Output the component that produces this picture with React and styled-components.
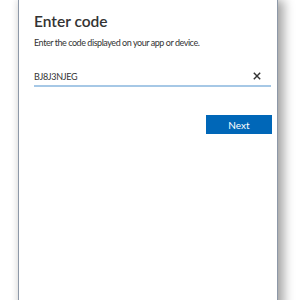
import React from "react";
import styled, { createGlobalStyle } from "styled-components";

const Global = createGlobalStyle`
  html, body { margin: 0; padding: 0; background: #ffffff; }
  body { width: 300px; height: 300px; overflow: hidden; font-family: "Lato", "Noto Sans", sans-serif; }
`;

const Stage = styled.div`
  width: 300px;
  height: 300px;
  display: flex;
  background: #ffffff;
`;

const Window = styled.div`
  margin-left: 18px;
  width: 260px;
  height: 310px;
  background: #ffffff;
  border-left: 1px solid #8d98a8;
  border-right: 1px solid #8d98a8;
  box-shadow: 6px 0 10px rgba(0, 0, 0, 0.35), -2px 0 6px rgba(0, 0, 0, 0.08);
  padding: 10px 6px 0 15px;
  box-sizing: border-box;
  display: flex;
  flex-direction: column;
`;

const Title = styled.h1`
  margin: 0;
  font-size: 15.5px;
  font-weight: 600;
  color: #333333;
  line-height: 22px;
`;

const Subtitle = styled.p`
  margin: 5px 0 0;
  font-size: 9px;
  letter-spacing: -0.45px;
  color: #333333;
  line-height: 12px;
`;

const Field = styled.div`
  margin-top: 19px;
  display: flex;
  align-items: center;
  height: 16px;
  border-bottom: 2px solid #a6c8e6;
  padding-bottom: 1px;
`;

const Code = styled.span`
  flex: 1;
  font-size: 9px;
  letter-spacing: -0.3px;
  color: #333333;
`;

const Clear = styled.svg`
  width: 8px;
  height: 8px;
  margin-right: 10px;
`;

const Actions = styled.div`
  margin-top: 28px;
  display: flex;
  justify-content: flex-end;
`;

const Button = styled.button`
  width: 66px;
  height: 19px;
  background: #0067b8;
  color: #ffffff;
  border: none;
  font-family: inherit;
  font-size: 10px;
  padding: 0;
  margin-right: -1px;
`;

export default function App() {
  return (
    <Stage>
      <Global />
      <Window>
        <Title>Enter code</Title>
        <Subtitle>Enter the code displayed on your app or device.</Subtitle>
        <Field>
          <Code>BJ8J3NJEG</Code>
          <Clear viewBox="0 0 10 10">
            <path d="M1 1 L9 9 M9 1 L1 9" stroke="#333333" strokeWidth="1.8" />
          </Clear>
        </Field>
        <Actions>
          <Button>Next</Button>
        </Actions>
      </Window>
    </Stage>
  );
}
